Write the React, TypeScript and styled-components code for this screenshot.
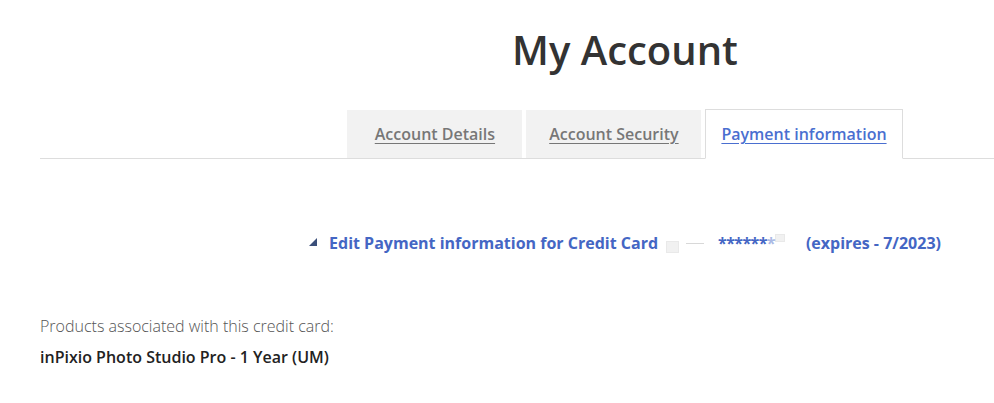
import React from "react";
import styled, { createGlobalStyle } from "styled-components";

const Global = createGlobalStyle`
  html, body { margin: 0; padding: 0; background: #fff; overflow: hidden; }
  body { font-family: "Open Sans", "Noto Sans", sans-serif; }
`;

const Page = styled.div`
  width: 1170px;
  padding: 0 0 0 40px;
`;

const Title = styled.h1`
  margin: 0;
  padding-top: 24px;
  text-align: center;
  font-size: 40px;
  font-weight: 600;
  color: #333;
  line-height: 52px;
`;

const TabBar = styled.div`
  margin-top: 33px;
  display: flex;
  justify-content: center;
  align-items: flex-end;
  gap: 4px;
  border-bottom: 1px solid #ddd;
  height: 49px;
`;

const Tab = styled.a<{ $active?: boolean }>`
  display: flex;
  align-items: center;
  justify-content: center;
  box-sizing: border-box;
  height: ${(p) => (p.$active ? "50px" : "48px")};
  width: ${(p) => (p.$active ? "auto" : "175px")};
  padding: 0 ${(p) => (p.$active ? "15px" : "0")};
  margin-bottom: ${(p) => (p.$active ? "-1px" : "0")};
  background: ${(p) => (p.$active ? "#fff" : "#f2f2f2")};
  border: ${(p) => (p.$active ? "1px solid #ddd" : "none")};
  border-bottom: ${(p) => (p.$active ? "1px solid #fff" : "none")};
  color: ${(p) => (p.$active ? "#4a6fd0" : "#777")};
  font-size: 16px;
  font-weight: 600;
  text-decoration: underline;
  text-underline-offset: 3px;
  cursor: pointer;
`;

const EditRow = styled.div`
  margin-top: 73px;
  display: flex;
  justify-content: center;
  align-items: center;
  color: #4466c4;
  font-size: 16px;
  font-weight: 700;
`;

const Triangle = styled.span`
  width: 0;
  height: 0;
  border-left: 8px solid transparent;
  border-bottom: 8px solid #3b4f7a;
  margin-right: 12px;
  margin-top: -2px;
`;

const Placeholder = styled.span<{ $w: number; $h: number }>`
  display: inline-block;
  width: ${(p) => p.$w}px;
  height: ${(p) => p.$h}px;
  background: #f1f1f1;
  border: 1px solid #e9e9e9;
  box-sizing: border-box;
`;

const Dash = styled.span`
  display: inline-block;
  width: 18px;
  height: 1px;
  background: #d8d8d8;
  margin: 0 14px 0 7px;
`;

const Stars = styled.span`
  letter-spacing: -0.6px;
`;

const FadedStar = styled.span`
  opacity: 0.45;
`;

const Gap = styled.span<{ $w: number }>`
  display: inline-block;
  width: ${(p) => p.$w}px;
`;

const Products = styled.div`
  margin-top: 61px;
  font-size: 16px;
  font-weight: 300;
  color: #555;
`;

const Product = styled.div`
  margin-top: 9px;
  font-size: 16px;
  font-weight: 600;
  color: #222;
`;

export default function App() {
  return (
    <>
      <Global />
      <Page>
        <Title>My Account</Title>
        <TabBar>
          <Tab>Account Details</Tab>
          <Tab>Account Security</Tab>
          <Tab $active>Payment information</Tab>
        </TabBar>
        <EditRow>
          <Triangle />
          Edit Payment information for Credit Card
          <Gap $w={8} />
          <Placeholder $w={13} $h={12} style={{ marginTop: 8 }} />
          <Dash />
          <Stars>
            ******<FadedStar>*</FadedStar>
          </Stars>
          <Placeholder $w={10} $h={8} style={{ marginTop: -10 }} />
          <Gap $w={21} />
          (expires - 7/2023)
        </EditRow>
        <Products>Products associated with this credit card:</Products>
        <Product>inPixio Photo Studio Pro - 1 Year (UM)</Product>
      </Page>
    </>
  );
}
